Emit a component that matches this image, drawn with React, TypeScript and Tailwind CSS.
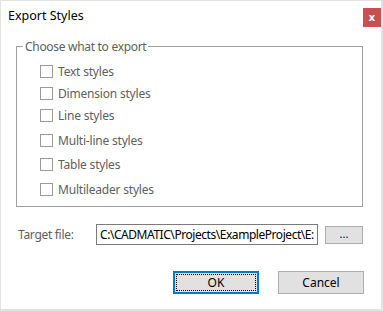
import React from "react";

const items: { label: string; mt: string }[] = [
  { label: "Text styles", mt: "mt-[16px]" },
  { label: "Dimension styles", mt: "mt-[9px]" },
  { label: "Line styles", mt: "mt-[9px]" },
  { label: "Multi-line styles", mt: "mt-[12px]" },
  { label: "Table styles", mt: "mt-[11px]" },
  { label: "Multileader styles", mt: "mt-[12px]" },
];

export default function App() {
  return (
    <div
      className="w-[383px] h-[311px] bg-white border-t border-l border-r-2 border-b-2 border-[#e3e3e3] flex flex-col text-[12px] leading-[15px]"
      style={{ fontFamily: '"Segoe UI", "Noto Sans", "Open Sans", sans-serif' }}
    >
      <div className="flex items-start h-[34px]">
        <div className="pl-[7px] pt-[7px] text-black text-[12.5px]">Export Styles</div>
        <div className="ml-auto mt-[7px] w-[18px] h-[19px] bg-[#c75050] flex items-center justify-center text-white font-bold text-[11px] leading-none pb-[2px]">
          x
        </div>
      </div>

      <fieldset className="ml-[15px] w-[347px] h-[168px] mt-[4px] border border-[#a0a0a0] px-0">
        <legend className="ml-[6px] px-[2px] text-[#5e5e5e] text-[12px] tracking-[-0.3px]">Choose what to export</legend>
        <div className="flex flex-col pl-[23px] -mt-[5px]">
          {items.map((it) => (
            <div key={it.label} className={`flex items-center h-[13px] ${it.mt}`}>
              <div className="w-[13px] h-[13px] border border-[#9a9a9a] bg-white" />
              <span className="ml-[5px] text-[#5e5e5e] text-[12px] tracking-[-0.2px]">{it.label}</span>
            </div>
          ))}
        </div>
      </fieldset>

      <div className="flex items-center mt-[17px] h-[21px]">
        <span className="ml-[17px] w-[78px] text-[#5e5e5e] text-[12px] tracking-[-0.3px]">Target file:</span>
        <div className="w-[222px] h-[21px] border border-[#7a7a7a] bg-white overflow-hidden whitespace-nowrap pl-[3px] text-black flex items-center tracking-[-0.45px]">
          C:\CADMATIC\Projects\ExampleProject\E:
        </div>
        <div className="ml-[7px] w-[38px] h-[18px] border border-[#adadad] bg-[#e1e1e1] flex items-center justify-center text-black text-[11px] pb-[3px]">
          ...
        </div>
      </div>

      <div className="flex mt-[26px]">
        <div className="ml-[172px] w-[86px] h-[23px] border-2 border-[#0078d7] bg-[#e1e1e1] p-[1px]">
          <div className="w-full h-full border border-dotted border-black flex items-center justify-center text-black">
            OK
          </div>
        </div>
        <div className="ml-[19px] w-[86px] h-[23px] border border-[#adadad] bg-[#e1e1e1] flex items-center justify-center text-black">
          Cancel
        </div>
      </div>
    </div>
  );
}
